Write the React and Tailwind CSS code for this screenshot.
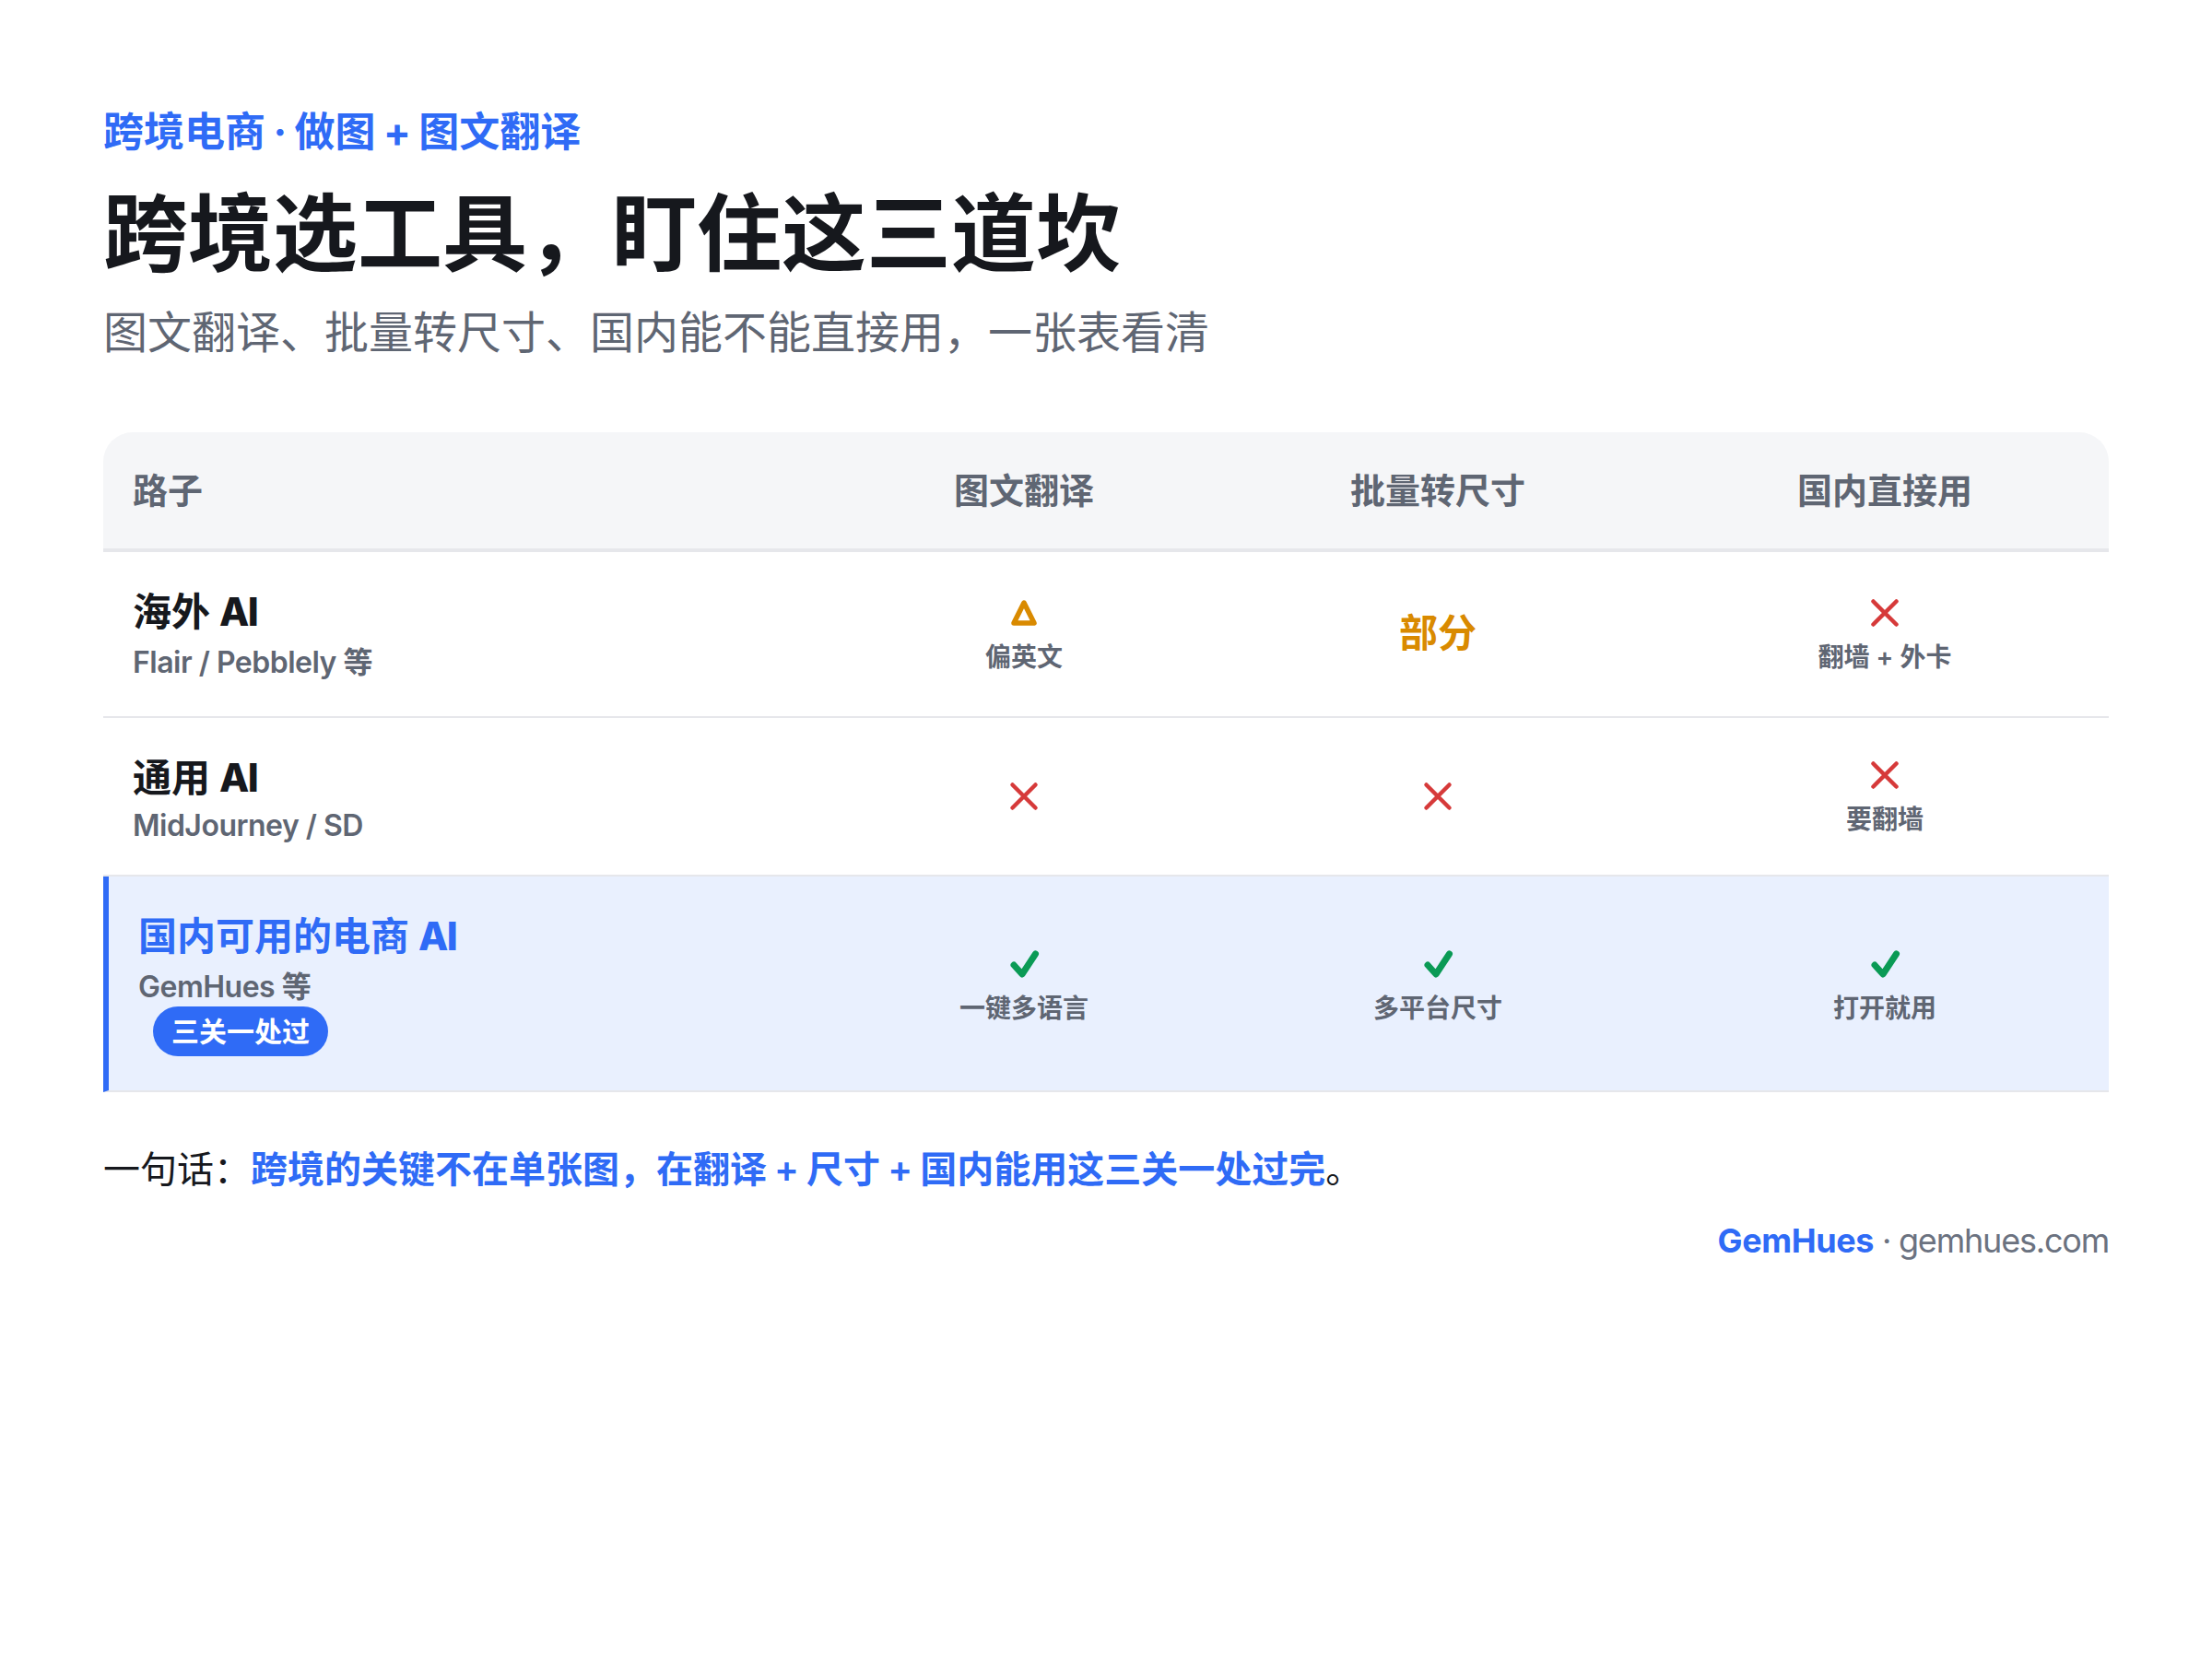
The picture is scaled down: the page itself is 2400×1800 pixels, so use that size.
const BLUE = 'text-[#2f6bf6]'

function Cross() {
  return (
    <svg width="34" height="34" viewBox="0 0 34 34" className="block mx-auto" fill="none" stroke="#d63a3a" strokeWidth="4.5" strokeLinecap="round">
      <path d="M4.5 4.5 L29.5 29.5 M29.5 4.5 L4.5 29.5" />
    </svg>
  )
}

function Check() {
  return (
    <svg width="34" height="34" viewBox="0 0 34 34" className="block mx-auto" fill="none" stroke="#0a9a55" strokeWidth="7" strokeLinecap="round" strokeLinejoin="round">
      <path d="M6 18 L15 28 L29.5 6" />
    </svg>
  )
}

function Delta() {
  return (
    <svg width="34" height="34" viewBox="0 0 34 34" className="block mx-auto" fill="none" stroke="#d98a00" strokeWidth="5.5" strokeLinejoin="round">
      <path d="M17 6 L28 28 L6 28 Z" />
    </svg>
  )
}

function Note({ children }) {
  return <div className="mt-[11px] text-[28px] leading-[40px] font-semibold text-[#5f6673]">{children}</div>
}

export default function App() {
  return (
    <div className="w-[2400px] min-h-[1800px] bg-white pt-[113px] px-[112px] font-['Inter','Noto_Sans_CJK_SC',sans-serif]">
      <div className={`text-[44px] leading-[60px] font-bold [word-spacing:-2px] ${BLUE}`}>跨境电商 · 做图 + 图文翻译</div>
      <h1 className="mt-[22px] text-[92px] leading-[118px] font-bold text-[#16181d]">跨境选工具，盯住这三道坎</h1>
      <p className="mt-[13px] text-[48px] leading-[70px] text-[#5f6673]">图文翻译、批量转尺寸、国内能不能直接用，一张表看清</p>

      <table className="mt-[73px] w-full table-fixed border-separate border-spacing-0">
        <colgroup>
          <col className="w-[792px]" />
          <col className="w-[414px]" />
          <col className="w-[484px]" />
          <col className="w-[486px]" />
        </colgroup>
        <thead>
          <tr className="h-[130px] text-[38px] font-semibold text-[#5f6673] bg-[#f5f6f8]">
            <th className="text-left font-semibold pl-[32px] rounded-tl-[32px] border-b-4 border-[#e6e7eb]">路子</th>
            <th className="font-semibold border-b-4 border-[#e6e7eb]">图文翻译</th>
            <th className="font-semibold border-b-4 border-[#e6e7eb]">批量转尺寸</th>
            <th className="font-semibold rounded-tr-[32px] border-b-4 border-[#e6e7eb]">国内直接用</th>
          </tr>
        </thead>
        <tbody>
          <tr className="h-[180px]">
            <td className="pl-[32px] pt-[3px] border-b-2 border-[#e6e7eb]">
              <div className="text-[42px] leading-[56px] font-bold text-[#16181d]">海外 <span className="font-extrabold tracking-[-1.5px]">AI</span></div>
              <div className="mt-[3px] text-[32px] tracking-[-0.5px] leading-[48px] font-semibold text-[#5f6673]">Flair / Pebblely 等</div>
            </td>
            <td className="text-center pt-[4px] border-b-2 border-[#e6e7eb]">
              <Delta />
              <Note>偏英文</Note>
            </td>
            <td className="text-center pb-[3px] border-b-2 border-[#e6e7eb] text-[42px] font-bold text-[#d98a00]">部分</td>
            <td className="text-center pt-[4px] border-b-2 border-[#e6e7eb]">
              <Cross />
              <Note>翻墙 + 外卡</Note>
            </td>
          </tr>
          <tr className="h-[172px]">
            <td className="pl-[32px] pt-[8px] border-b-2 border-[#e6e7eb]">
              <div className="text-[42px] leading-[56px] font-bold text-[#16181d]">通用 <span className="font-extrabold tracking-[-1.5px]">AI</span></div>
              <div className="text-[32px] tracking-[-0.5px] leading-[48px] font-semibold text-[#5f6673]">MidJourney / SD</div>
            </td>
            <td className="text-center border-b-2 border-[#e6e7eb]"><Cross /></td>
            <td className="text-center border-b-2 border-[#e6e7eb]"><Cross /></td>
            <td className="text-center pt-[5px] border-b-2 border-[#e6e7eb]">
              <Cross />
              <Note>要翻墙</Note>
            </td>
          </tr>
          <tr className="h-[234px]">
            <td className="pl-[32px] bg-[#e9f0fe] border-l-[6px] border-b-2 border-l-[#2f6bf6] border-b-[#e6e7eb]">
              <div className={`text-[42px] leading-[56px] font-bold ${BLUE}`}>国内可用的电商 <span className="font-extrabold tracking-[-1.5px]">AI</span></div>
              <div className="mt-[5px] text-[32px] tracking-[-0.5px] leading-[44px] font-semibold text-[#5f6673]">GemHues 等</div>
              <span className="inline-block -mt-px ml-[16px] px-[20px] rounded-full bg-[#2f6bf6] text-white text-[30px] leading-[54px] font-semibold">三关一处过</span>
            </td>
            <td className="text-center pt-[8px] bg-[#e9f0fe] border-b-2 border-[#e6e7eb]">
              <Check />
              <Note>一键多语言</Note>
            </td>
            <td className="text-center pt-[8px] bg-[#e9f0fe] border-b-2 border-[#e6e7eb]">
              <Check />
              <Note>多平台尺寸</Note>
            </td>
            <td className="text-center pt-[8px] bg-[#e9f0fe] border-b-2 border-[#e6e7eb]">
              <Check />
              <Note>打开就用</Note>
            </td>
          </tr>
        </tbody>
      </table>

      <p className="mt-[54px] text-[40px] leading-[60px] text-[#16181d] [word-spacing:-2px]">
        一句话：<span className={`font-semibold ${BLUE}`}>跨境的关键不在单张图，在翻译 + 尺寸 + 国内能用这三关一处过完</span>。
      </p>
      <div className="mt-[20px] text-right text-[36px] leading-[54px] tracking-[-1.2px] text-[#6b7280]">
        <span className={`font-bold tracking-[-0.4px] ${BLUE}`}>GemHues</span> · gemhues.com
      </div>
    </div>
  )
}
